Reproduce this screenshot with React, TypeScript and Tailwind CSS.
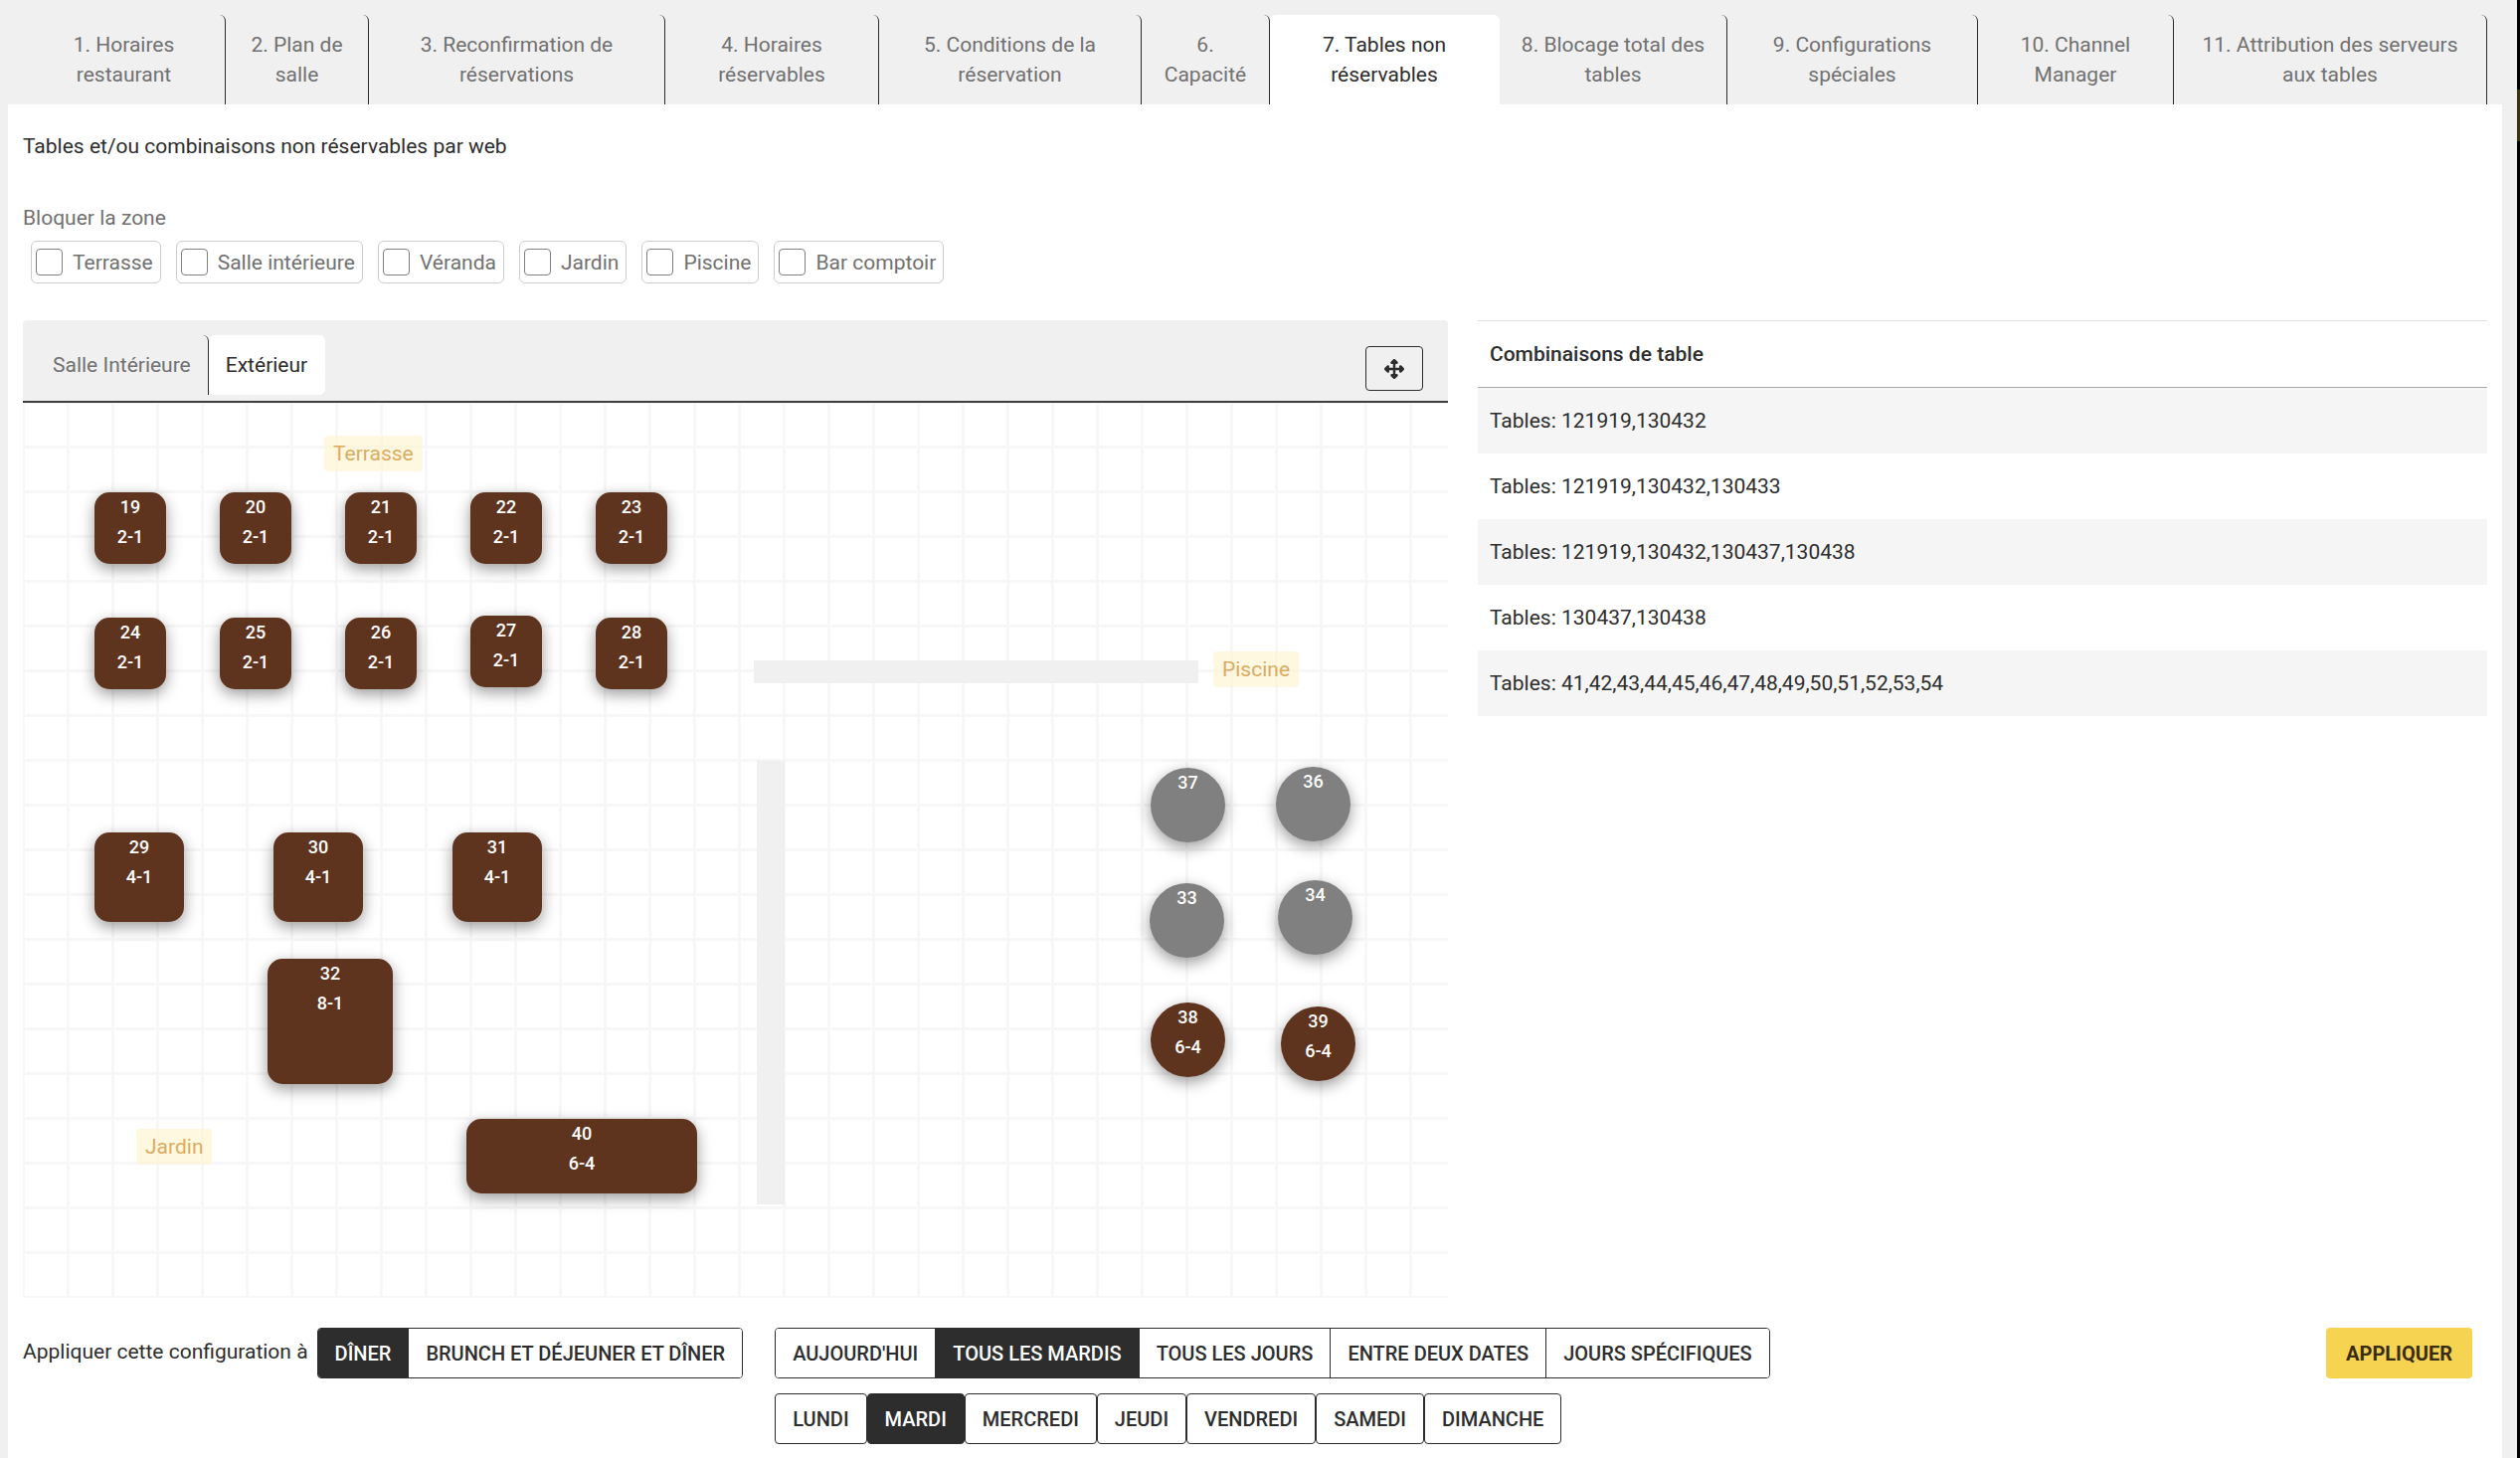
import { useState } from "react";
import { FaUpDownLeftRight } from "react-icons/fa6";

const steps = [
    "1. Horaires restaurant",
    "2. Plan de salle",
    "3. Reconfirmation de réservations",
    "4. Horaires réservables",
    "5. Conditions de la réservation",
    "6. Capacité",
    "7. Tables non réservables",
    "8. Blocage total des tables",
    "9. Configurations spéciales",
    "10. Channel Manager",
    "11. Attribution des serveurs aux tables",
];

const zones = ["Terrasse", "Salle intérieure", "Véranda", "Jardin", "Piscine", "Bar comptoir"];

const combinations = [
    "121919,130432",
    "121919,130432,130433",
    "121919,130432,130437,130438",
    "130437,130438",
    "41,42,43,44,45,46,47,48,49,50,51,52,53,54",
];

// Positions are relative to the top left corner of the floor plan
const tables = [
    { id: 19, seats: "2-1", x: 72, y: 90, w: 72, h: 72 },
    { id: 20, seats: "2-1", x: 198, y: 90, w: 72, h: 72 },
    { id: 21, seats: "2-1", x: 324, y: 90, w: 72, h: 72 },
    { id: 22, seats: "2-1", x: 450, y: 90, w: 72, h: 72 },
    { id: 23, seats: "2-1", x: 576, y: 90, w: 72, h: 72 },
    { id: 24, seats: "2-1", x: 72, y: 216, w: 72, h: 72 },
    { id: 25, seats: "2-1", x: 198, y: 216, w: 72, h: 72 },
    { id: 26, seats: "2-1", x: 324, y: 216, w: 72, h: 72 },
    { id: 27, seats: "2-1", x: 450, y: 214, w: 72, h: 72 },
    { id: 28, seats: "2-1", x: 576, y: 216, w: 72, h: 72 },
    { id: 29, seats: "4-1", x: 72, y: 432, w: 90, h: 90 },
    { id: 30, seats: "4-1", x: 252, y: 432, w: 90, h: 90 },
    { id: 31, seats: "4-1", x: 432, y: 432, w: 90, h: 90 },
    { id: 32, seats: "8-1", x: 246, y: 559, w: 126, h: 126 },
    { id: 40, seats: "6-4", x: 446, y: 720, w: 232, h: 75 },
    { id: 37, x: 1134, y: 367, w: 75, h: 75, round: true },
    { id: 36, x: 1260, y: 366, w: 75, h: 75, round: true },
    { id: 33, x: 1133, y: 483, w: 75, h: 75, round: true },
    { id: 34, x: 1262, y: 480, w: 75, h: 75, round: true },
    { id: 38, seats: "6-4", x: 1134, y: 603, w: 75, h: 75, round: true },
    { id: 39, seats: "6-4", x: 1265, y: 607, w: 75, h: 75, round: true },
];

const walls = [
    { x: 735, y: 259, w: 447, h: 23 },
    { x: 738, y: 360, w: 28, h: 446 },
];

const labels = [
    { text: "Terrasse", x: 303, y: 33 },
    { text: "Piscine", x: 1197, y: 250 },
    { text: "Jardin", x: 114, y: 730 },
];

const services = ["Dîner", "Brunch et déjeuner et dîner"];
const ranges = ["Aujourd'hui", "Tous les mardis", "Tous les jours", "Entre deux dates", "Jours spécifiques"];
const days = ["Lundi", "Mardi", "Mercredi", "Jeudi", "Vendredi", "Samedi", "Dimanche"];

const ButtonGroup = ({ items, value, onChange, rounded = false }) => (
    <div className={`flex ${rounded ? "" : "rounded border border-[#2d2d2d] overflow-hidden divide-x divide-[#2d2d2d]"}`}>
        {items.map((item) => (
            <button
                key={item}
                onClick={() => onChange(item)}
                className={`px-[17px] uppercase font-medium text-xl whitespace-nowrap 
                ${rounded ? "h-[51px] rounded border border-[#2d2d2d]" : "h-[49px]"}
                ${item === value ? "bg-[#2d2d2d] text-white" : "bg-white text-[#2d2d2d]"}`}
            >
                {item}
            </button>
        ))}
    </div>
);

const FloorPlan = () => (
    <div className="relative h-[900px] overflow-hidden bg-[linear-gradient(to_right,#f7f7f7_3px,transparent_3px),linear-gradient(to_bottom,#f7f7f7_3px,transparent_3px)] bg-[size:45px_45px] bg-[position:-1px_-2px]">
        {walls.map((wall) => (
            <div key={wall.x} className="absolute bg-[#f0f0f0]" style={{ left: wall.x, top: wall.y, width: wall.w, height: wall.h }} />
        ))}
        {labels.map((label) => (
            <div
                key={label.text}
                className="absolute h-9 px-[9px] rounded flex items-center bg-[#fff3cd]/60 text-[#dcab60]"
                style={{ left: label.x, top: label.y }}
            >
                {label.text}
            </div>
        ))}
        {tables.map((table) => (
            <button
                key={table.id}
                className={`absolute flex flex-col items-center justify-start text-white font-medium text-lg leading-[30px] shadow-[0_5px_15px_0_rgba(0,0,0,0.4)] 
                ${table.round ? "rounded-full" : "rounded-[15px]"} 
                ${table.seats ? "bg-[#5f341e]" : "bg-[#808080]"}`}
                style={{ left: table.x, top: table.y, width: table.w, height: table.h }}
            >
                <span>{table.id}</span>
                {table.seats && <span>{table.seats}</span>}
            </button>
        ))}
    </div>
);

export default function App() {
    const [step, setStep] = useState(steps[6]);
    const [room, setRoom] = useState("Extérieur");
    const [service, setService] = useState(services[0]);
    const [range, setRange] = useState(ranges[1]);
    const [day, setDay] = useState(days[1]);

    return (
        <div className="min-h-screen flex bg-[#f0f0f0] font-['Roboto',sans-serif] text-[21px] leading-[30px] text-[#2d2d2d]">
            <div className="grow min-w-0 flex flex-col pl-2 pr-[15px]">
                <nav className="pt-[15px] px-[15px] grid grid-cols-[204fr_144fr_298fr_215fr_264fr_129fr_231fr_229fr_252fr_197fr_315fr]">
                    {steps.map((item) => (
                        <button
                            key={item}
                            onClick={() => setStep(item)}
                            className={`h-[90px] px-5 flex items-center justify-center text-center border-r rounded-tr-md
                            ${item === step ? "bg-white border-white rounded-tl-md" : "border-[#2d2d2d] text-[#717171]"}`}
                        >
                            {item}
                        </button>
                    ))}
                </nav>

                <main className="grow bg-white px-[15px]">
                    <h1 className="pt-[27px]">Tables et/ou combinaisons non réservables par web</h1>

                    <fieldset className="mt-[42px] text-[#717171]">
                        <legend>Bloquer la zone</legend>
                        <div className="mt-2 ml-2 flex gap-[15px]">
                            {zones.map((zone) => (
                                <label key={zone} className="h-[43px] pl-1 pr-[7px] flex items-center border border-[#ccc] rounded-md">
                                    <input type="checkbox" className="size-[27px] mr-[10px] appearance-none border border-[#808080] rounded checked:bg-[#2d2d2d]" />
                                    {zone}
                                </label>
                            ))}
                        </div>
                    </fieldset>

                    <div className="mt-[37px] grid grid-cols-[1433fr_1015fr] gap-[30px]">
                        <section>
                            <div className="h-[83px] pt-[15px] pl-[13px] pr-[25px] flex items-start justify-between bg-[#f0f0f0] border-b-2 border-[#3d3d3d] rounded-t">
                                <div className="flex">
                                    {["Salle Intérieure", "Extérieur"].map((item) => (
                                        <button
                                            key={item}
                                            onClick={() => setRoom(item)}
                                            className={`h-[60px] px-[17px] border-r rounded-tr-md ${item === room ? "bg-white border-white rounded-md" : "border-[#2d2d2d] text-[#717171]"}`}
                                        >
                                            {item}
                                        </button>
                                    ))}
                                </div>
                                <button aria-label="Déplacer" className="mt-[11px] w-[58px] h-[45px] flex items-center justify-center border border-[#2d2d2d] rounded">
                                    <FaUpDownLeftRight className="size-5" />
                                </button>
                            </div>
                            <FloorPlan />
                        </section>

                        <section>
                            <table className="w-full text-left">
                                <thead>
                                    <tr className="h-[67px] border-t border-b border-t-[#ddd] border-b-[#aaa]">
                                        <th className="px-3 font-medium">Combinaisons de table</th>
                                    </tr>
                                </thead>
                                <tbody>
                                    {combinations.map((item) => (
                                        <tr key={item} className="h-[66px] odd:bg-[#f5f5f5]">
                                            <td className="px-3">Tables: {item}</td>
                                        </tr>
                                    ))}
                                </tbody>
                            </table>
                        </section>
                    </div>

                    <div className="mt-[30px] pr-[15px] flex items-start">
                        <span className="mt-[9px] mr-[9px]">Appliquer cette configuration à</span>
                        <ButtonGroup items={services} value={service} onChange={setService} />
                        <div className="ml-8 flex flex-col items-start gap-[15px]">
                            <ButtonGroup items={ranges} value={range} onChange={setRange} />
                            <ButtonGroup items={days} value={day} onChange={setDay} rounded />
                        </div>
                        <button className="ml-auto h-[51px] px-5 rounded bg-[#f6d350] text-[#3a2c14] text-xl font-bold">APPLIQUER</button>
                    </div>
                </main>
            </div>
            <div className="w-[3px] shrink-0 pt-[90px] bg-black">
                <div className="h-[52px] bg-[#3b3413]" />
            </div>
        </div>
    );
}
